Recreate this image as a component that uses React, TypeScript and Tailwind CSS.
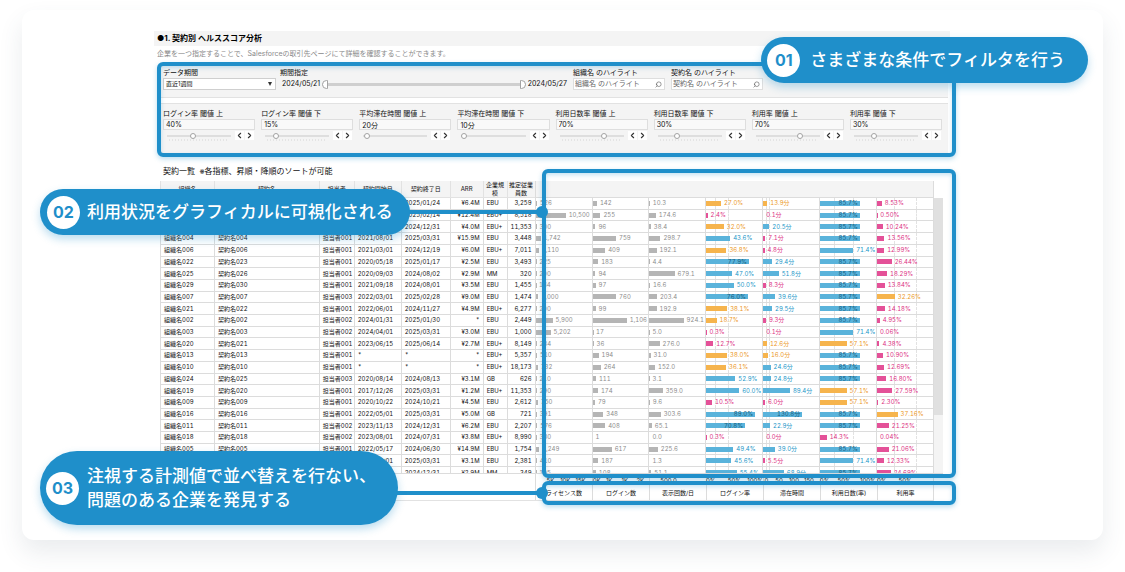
import React from "react";
import { ChevronLeft, ChevronRight, Search } from "lucide-react";

type Tone = "gray" | "blue" | "orange" | "pink";

interface Metric {
  label: string;
  max: number;
  digits: number;
  unit: string;
  // [upper, lower] thresholds, drawn as guide lines and used for the bar tone
  limits?: [number, number];
  ticks: [number, string][];
}

const METRICS: Metric[] = [
  { label: "ライセンス数", max: 19500, digits: 0, unit: "", ticks: [[5000, "5K"], [10200, "10K"], [15500, "15K"]] },
  { label: "ログイン数", max: 1800, digits: 0, unit: "", ticks: [[120, "0K"], [520, "1K"], [1020, "1K"], [1520, "2K"]] },
  { label: "表示回数/日", max: 1510, digits: 1, unit: "", ticks: [[500, "500.0"]] },
  { label: "ログイン率", max: 102, digits: 1, unit: "%", limits: [40, 15], ticks: [[7, "0%"], [50, "50%"], [88, "100%"]] },
  { label: "滞在時間", max: 187, digits: 1, unit: "分", limits: [20, 10], ticks: [[8, "0"], [50, "50"], [100, "100"], [150, "150"]] },
  { label: "利用日数(率)", max: 120.6, digits: 1, unit: "%", limits: [70, 30], ticks: [[8, "0%"], [50, "50%"], [101, "100%"]] },
  { label: "利用率", max: 101, digits: 2, unit: "%", limits: [70, 30], ticks: [[7, "0%"], [50, "50%"]] },
];

type Row = { info: string[]; values: number[] };

const ROWS: Row[] = [
  { info: ["組織名001", "契約名001", "担当者001", "2022/01/25", "2025/01/24", "¥6.4M", "EBU", "3,259"], values: [526, 142, 10.3, 27.0, 13.9, 85.7, 8.53] },
  { info: ["組織名008", "契約名008", "担当者001", "2022/02/15", "2025/02/14", "¥12.4M", "EBU+", "8,518"], values: [10500, 255, 174.6, 2.4, 0.1, 85.7, 0.5] },
  { info: ["組織名012", "契約名012", "担当者002", "2022/01/01", "2024/12/31", "¥4.0M", "EBU+", "11,353"], values: [300, 96, 38.4, 32.0, 20.5, 85.7, 10.24] },
  { info: ["組織名004", "契約名004", "担当者001", "2021/08/01", "2025/03/31", "¥15.9M", "EBU", "3,448"], values: [1742, 759, 298.7, 43.6, 7.1, 85.7, 13.56] },
  { info: ["組織名006", "契約名006", "担当者001", "2021/03/01", "2024/12/19", "¥6.0M", "EBU+", "7,011"], values: [1110, 409, 192.1, 36.8, 4.8, 71.4, 12.99] },
  { info: ["組織名022", "契約名023", "担当者001", "2020/05/18", "2025/01/17", "¥2.5M", "EBU", "3,493"], values: [225, 183, 4.4, 77.9, 29.4, 85.7, 26.44] },
  { info: ["組織名025", "契約名026", "担当者001", "2020/09/03", "2024/08/02", "¥2.9M", "MM", "320"], values: [200, 94, 679.1, 47.0, 51.8, 85.7, 18.29] },
  { info: ["組織名029", "契約名030", "担当者001", "2021/09/18", "2024/08/01", "¥3.5M", "EBU", "1,455"], values: [164, 97, 16.6, 50.0, 8.3, 85.7, 13.84] },
  { info: ["組織名007", "契約名007", "担当者003", "2022/03/01", "2025/02/28", "¥9.0M", "EBU", "1,474"], values: [1000, 760, 203.4, 76.0, 39.6, 85.7, 32.26] },
  { info: ["組織名021", "契約名022", "担当者001", "2022/06/01", "2024/11/27", "¥4.9M", "EBU+", "6,277"], values: [200, 99, 192.9, 38.1, 29.5, 85.7, 14.18] },
  { info: ["組織名002", "契約名002", "担当者002", "2024/01/31", "2025/01/30", "*", "EBU", "2,449"], values: [5900, 1106, 924.1, 18.7, 9.3, 85.7, 4.95] },
  { info: ["組織名003", "契約名003", "担当者002", "2024/04/01", "2025/03/31", "¥3.0M", "EBU", "1,000"], values: [5202, 17, 5.0, 0.3, 0.1, 71.4, 0.06] },
  { info: ["組織名020", "契約名021", "担当者001", "2023/06/15", "2025/06/14", "¥2.7M", "EBU+", "8,149"], values: [284, 36, 276.0, 12.7, 12.6, 57.1, 4.38] },
  { info: ["組織名013", "契約名013", "担当者001", "*", "*", "*", "EBU+", "5,357"], values: [510, 194, 31.0, 38.0, 16.0, 85.7, 10.9] },
  { info: ["組織名010", "契約名010", "担当者001", "*", "*", "*", "EBU+", "18,173"], values: [732, 264, 152.0, 36.1, 24.6, 85.7, 12.69] },
  { info: ["組織名024", "契約名025", "担当者003", "2020/08/14", "2024/08/13", "¥3.1M", "GB", "626"], values: [210, 111, 3.1, 52.9, 24.8, 85.7, 16.8] },
  { info: ["組織名019", "契約名020", "担当者001", "2017/12/26", "2025/03/31", "¥1.2M", "EBU+", "11,353"], values: [290, 174, 359.0, 60.0, 89.4, 57.1, 27.59] },
  { info: ["組織名009", "契約名009", "担当者001", "2020/10/22", "2024/10/21", "¥4.5M", "EBU", "2,612"], values: [750, 79, 9.6, 10.5, 6.0, 57.1, 2.3] },
  { info: ["組織名016", "契約名016", "担当者001", "2022/05/01", "2025/03/31", "¥5.0M", "GB", "721"], values: [391, 348, 303.6, 89.0, 130.8, 85.7, 37.16] },
  { info: ["組織名011", "契約名011", "担当者002", "2023/11/13", "2024/12/31", "¥6.2M", "EBU", "2,207"], values: [576, 408, 65.1, 70.8, 22.9, 85.7, 21.25] },
  { info: ["組織名018", "契約名018", "担当者002", "2023/08/01", "2024/07/31", "¥3.8M", "EBU+", "8,990"], values: [330, 1, 0.0, 0.3, 0.0, 14.3, 0.04] },
  { info: ["組織名005", "契約名005", "担当者001", "2022/05/17", "2024/06/30", "¥14.9M", "EBU", "1,754"], values: [1249, 617, 225.6, 49.4, 39.0, 85.7, 21.06] },
  { info: ["組織名014", "契約名014", "担当者001", "2022/04/01", "2025/03/31", "¥3.1M", "EBU", "2,381"], values: [410, 187, 1.3, 45.6, 5.5, 71.4, 12.33] },
  { info: ["組織名015", "契約名015", "担当者001", "2022/01/01", "2024/12/31", "¥2.9M", "MM", "349"], values: [195, 108, 51.1, 55.4, 68.9, 85.7, 24.69] },
];

const HEADERS = ["組織名", "契約名", "担当者", "契約開始日", "契約終了日", "ARR", "企業規模", "推定従業員数"];

const THRESHOLDS = [
  { label: "ログイン率 閾値 上", value: "40%", position: 40, ticks: true },
  { label: "ログイン率 閾値 下", value: "15%", position: 13, ticks: true },
  { label: "平均滞在時間 閾値 上", value: "20分", position: 1, ticks: false },
  { label: "平均滞在時間 閾値 下", value: "10分", position: 0, ticks: false },
  { label: "利用日数率 閾値 上", value: "70%", position: 71, ticks: true },
  { label: "利用日数率 閾値 下", value: "30%", position: 29, ticks: true },
  { label: "利用率 閾値 上", value: "70%", position: 71, ticks: true },
  { label: "利用率 閾値 下", value: "30%", position: 29, ticks: true },
];

const BAR: Record<Tone, string> = {
  gray: "bg-[#b5b5b5]",
  blue: "bg-[#5ab3db]",
  orange: "bg-[#f6b44d]",
  pink: "bg-[#e45198]",
};

const TEXT: Record<Tone, string> = {
  gray: "text-[#8c8c8c]",
  blue: "text-[#2196c8]",
  orange: "text-[#ec981f]",
  pink: "text-[#dc2f82]",
};

const toneOf = (value: number, limits?: [number, number]): Tone => {
  if (!limits) return "gray";
  if (value >= limits[0]) return "blue";
  return value >= limits[1] ? "orange" : "pink";
};

const BarCell: React.FC<{ value: number; metric: Metric }> = ({ value, metric }) => {
  const tone = toneOf(value, metric.limits);
  const width = (value / metric.max) * 100;
  const inside = width > 68;
  const text =
    value.toLocaleString("en-US", {
      minimumFractionDigits: metric.digits,
      maximumFractionDigits: metric.digits,
    }) + metric.unit;

  return (
    <td className="relative border-b border-l border-[#dcdcdc] p-0">
      {metric.limits?.map((limit) => (
        <span
          key={limit}
          className="absolute inset-y-0 border-l border-dashed border-[#e2e2e2]"
          style={{ left: `${(limit / metric.max) * 100}%` }}
        />
      ))}
      <div className="relative flex items-center">
        <div
          className={`flex h-[5px] shrink-0 items-center justify-end ${BAR[tone]}`}
          style={{ width: `${width}%` }}
        >
          {inside && <span className="pr-[2px] text-[#14607f]">{text}</span>}
        </div>
        {!inside && <span className={`pl-[3px] ${TEXT[tone]}`}>{text}</span>}
      </div>
    </td>
  );
};

const THUMB =
  "[&::-webkit-slider-thumb]:appearance-none [&::-webkit-slider-thumb]:border [&::-webkit-slider-thumb]:border-[#a3a3a3] [&::-webkit-slider-thumb]:bg-white";

const ThresholdControl: React.FC<(typeof THRESHOLDS)[number] & { id: string }> = ({
  id,
  label,
  value,
  position,
  ticks,
}) => (
  <div className="pr-[6px]">
    <label htmlFor={id} className="block leading-[10px]">
      {label}
    </label>
    <input
      id={id}
      defaultValue={value}
      className="block h-[11px] w-full border border-[#dedede] bg-[#f9f9f9] px-[2px] leading-[9px]"
    />
    <div className="mt-px flex h-[9px] items-center gap-px pl-1">
      <div className="relative flex h-full flex-1 items-center">
        <input
          type="range"
          aria-label={label}
          defaultValue={position}
          className={`h-[2px] w-full appearance-none bg-[#dedede] [&::-webkit-slider-thumb]:size-[6px] [&::-webkit-slider-thumb]:rounded-full ${THUMB}`}
        />
        {ticks && (
          <span className="absolute inset-x-[2px] -bottom-px h-[2px] bg-[repeating-linear-gradient(to_right,#e4e4e4_0_1px,transparent_1px_3px)]" />
        )}
      </div>
      <button
        aria-label={`${label} 減らす`}
        className="ml-[3px] flex size-[9px] items-center justify-center bg-white text-[#333]"
      >
        <ChevronLeft size={9} strokeWidth={3} />
      </button>
      <button
        aria-label={`${label} 増やす`}
        className="mr-px flex size-[9px] items-center justify-center bg-white text-[#333]"
      >
        <ChevronRight size={9} strokeWidth={3} />
      </button>
    </div>
  </div>
);

const HighlightSearch: React.FC<{ id: string; label: string }> = ({ id, label }) => (
  <div className="w-[92px]">
    <label htmlFor={id} className="block leading-[11px]">
      {label}
    </label>
    <div className="flex h-[12px] items-center border border-[#dedede] bg-white pr-[2px]">
      <input
        id={id}
        placeholder={label}
        className="w-full min-w-0 px-px leading-[10px] placeholder:text-[#666] focus:outline-none"
      />
      <Search size={7} strokeWidth={2} className="shrink-0 -scale-x-100 text-[#555]" />
    </div>
  </div>
);

const Frame: React.FC<{ className: string }> = ({ className }) => (
  <div
    className={`pointer-events-none absolute rounded-[6px] border-4 border-[#1f8fca] shadow-[0_2px_5px_rgba(31,143,202,0.3),inset_0_2px_4px_rgba(31,143,202,0.25)] ${className}`}
  />
);

const Callout: React.FC<{ no: string; className: string; children: React.ReactNode }> = ({
  no,
  className,
  children,
}) => (
  <div
    className={`absolute flex items-center rounded-full bg-[#1f8fca] text-[17px] leading-6 font-medium whitespace-nowrap text-white shadow-[0_4px_8px_rgba(31,143,202,0.3)] ${className}`}
  >
    <span className="flex size-[33px] shrink-0 items-center justify-center rounded-full bg-white text-[16px] font-bold text-[#1f8fca]">
      {no}
    </span>
    <p>{children}</p>
  </div>
);

const Connector: React.FC<{ className: string }> = ({ className }) => (
  <div className={`absolute flex h-1 items-center justify-end bg-[#1f8fca] ${className}`}>
    <span className="-mr-[6px] size-[12px] shrink-0 rounded-full bg-[#1f8fca]" />
  </div>
);

const FilterPanel: React.FC = () => (
  <section className="relative ml-[3px] px-1 pt-[3px] pb-[4px] text-[7px]">
    <div className="mr-1 flex h-[33px] border-b border-[#e2e2e2] bg-[#f4f4f4] pt-[2px] pr-[185px] pl-[2px]">
      <div className="w-[113px]">
        <label htmlFor="period" className="block leading-[11px]">
          データ期間
        </label>
        <div className="relative">
          <select
            id="period"
            className="block h-[12px] w-full appearance-none border border-[#cfcfcf] bg-white px-[2px] text-[6px] leading-[10px]"
          >
            <option>直近1週間</option>
          </select>
          <span className="pointer-events-none absolute top-[4px] right-[4px] border-x-2 border-t-4 border-x-transparent border-t-[#333]" />
        </div>
      </div>
      <fieldset className="ml-[4px] min-w-0 flex-1">
        <legend className="block leading-[11px]">期間指定</legend>
        <div className="flex h-[12px] items-center gap-[2px] pl-[2px]">
          <span>2024/05/21</span>
          <div className="flex flex-1 items-center">
            <input
              type="range"
              aria-label="開始日"
              defaultValue={0}
              className={`h-[3px] w-1/2 appearance-none bg-[#cfcfcf] [&::-webkit-slider-thumb]:h-[9px] [&::-webkit-slider-thumb]:w-[6px] [&::-webkit-slider-thumb]:rounded-l-full ${THUMB}`}
            />
            <input
              type="range"
              aria-label="終了日"
              defaultValue={100}
              className={`h-[3px] w-1/2 appearance-none bg-[#cfcfcf] [&::-webkit-slider-thumb]:h-[9px] [&::-webkit-slider-thumb]:w-[6px] [&::-webkit-slider-thumb]:rounded-r-full ${THUMB}`}
            />
          </div>
          <span>2024/05/27</span>
        </div>
      </fieldset>
      <div className="ml-[6px] flex gap-[6px]">
        <HighlightSearch id="org-highlight" label="組織名 のハイライト" />
        <HighlightSearch id="contract-highlight" label="契約名 のハイライト" />
      </div>
    </div>
    <div className="mt-[5px] mr-1 grid grid-cols-8 border-t border-[#e2e2e2] bg-[#f4f4f4] pt-[5px] pb-[13px] pl-[2px]">
      {THRESHOLDS.map((item, i) => (
        <ThresholdControl key={item.label} id={`threshold-${i}`} {...item} />
      ))}
    </div>
    <Frame className="inset-0" />
  </section>
);

const ContractTable: React.FC = () => (
  <div className="flex h-[293px] overflow-hidden border-b border-[#dcdcdc]">
    <table className="h-[298px] flex-1 table-fixed border-separate border-spacing-0 border-r border-[#dcdcdc] text-[6px] leading-[8px] whitespace-nowrap tabular-nums">
      <colgroup>
        <col className="w-[54px]" />
        <col className="w-[105px]" />
        <col className="w-[35px]" />
        <col className="w-[47px]" />
        <col className="w-[49px]" />
        <col className="w-[33px]" />
        <col className="w-[24px]" />
        <col className="w-[28px]" />
        {METRICS.map((m) => (
          <col key={m.label} className="w-[57px]" />
        ))}
      </colgroup>
      <thead>
        <tr className="h-[17px] bg-[#f4f4f4]">
          {HEADERS.map((h) => (
            <th
              key={h}
              className="border-b border-l border-[#e2e2e2] px-px py-0 font-normal whitespace-normal"
            >
              {h}
            </th>
          ))}
          <th colSpan={7} aria-label="計測値" className="border-b border-l border-[#dcdcdc] p-0" />
        </tr>
      </thead>
      <tbody>
        {ROWS.map(({ info, values }) => (
          <tr key={info[0]}>
            {info.map((text, i) => (
              <td
                key={i}
                className={`border-b border-l border-[#dcdcdc] py-0 ${
                  i === 5 || i === 7 ? "pr-[3px] text-right" : "pl-[3px]"
                }`}
              >
                {text}
              </td>
            ))}
            {values.map((value, i) => (
              <BarCell key={i} value={value} metric={METRICS[i]} />
            ))}
          </tr>
        ))}
      </tbody>
    </table>
    <div className="mt-[17px] w-[9px] bg-[#f4f4f4]">
      <div className="h-[217px] bg-[#e0e0e0]" />
    </div>
  </div>
);

const ChartAxis: React.FC = () => (
  <div className="mr-[9px] grid grid-cols-[375fr_repeat(7,57fr)] border-b border-[#e2e2e2] text-[6px]">
    <div />
    {METRICS.map((m) => (
      <div key={m.label} className="border-l border-[#dcdcdc] text-center last:border-r">
        <div className="relative h-[12px]">
          {m.ticks.map(([at, text], i) => (
            <span
              key={i}
              className="absolute bottom-0 -translate-x-1/2 leading-[10px]"
              style={{ left: `${(at / m.max) * 100}%` }}
            >
              {text}
            </span>
          ))}
        </div>
        <div className="leading-[14px]">{m.label}</div>
      </div>
    ))}
  </div>
);

export default function App() {
  return (
    <div className="bg-white px-[22px] pt-[10px] pb-8 font-[Inter,'Noto_Sans_CJK_JP',sans-serif] text-[#111]">
      <main className="relative rounded-xl bg-white pt-[21px] pr-[147px] pb-[39px] pl-[132px] shadow-[0_12px_24px_rgba(60,80,100,0.11)]">
        <h1 className="mr-[6px] bg-[#f4f4f4] pl-[3px] text-[8px] leading-[15px] font-bold text-black">
          ●1. 契約別 ヘルススコア分析
        </h1>
        <p className="pl-[3px] text-[7px] leading-[16px] text-[#8a8a8a]">
          企業を一つ指定することで、Salesforceの取引先ページにて詳細を確認することができます。
        </p>
        <FilterPanel />

        <section className="relative mr-[13px] ml-[6px] pt-2">
          <h2 className="pb-1 pl-[3px] text-[8px] leading-3">
            契約一覧&nbsp; ※各指標、昇順・降順のソートが可能
          </h2>
          <ContractTable />
          <ChartAxis />
          <Frame className="top-[12px] -right-[13px] bottom-[23px] left-[382px]" />
          <Frame className="-right-[13px] -bottom-[4px] left-[382px] h-[24px]" />
        </section>

        <Connector className="top-[200px] left-[380px] w-[140px]" />
        <Connector className="top-[481px] left-[370px] w-[150px]" />
        <Callout no="01" className="top-[27px] right-[15px] h-[46px] gap-[10px] pr-[23px] pl-[6px]">
          さまざまな条件でフィルタを行う
        </Callout>
        <Callout no="02" className="top-[179px] left-[18px] h-[46px] gap-[7px] pr-[17px] pl-[7px]">
          利用状況をグラフィカルに可視化される
        </Callout>
        <Callout no="03" className="top-[441px] left-[18px] h-[74px] gap-[8px] pr-[22px] pl-[6px]">
          注視する計測値で並べ替えを行ない、
          <br />
          問題のある企業を発見する
        </Callout>
      </main>
    </div>
  );
}
